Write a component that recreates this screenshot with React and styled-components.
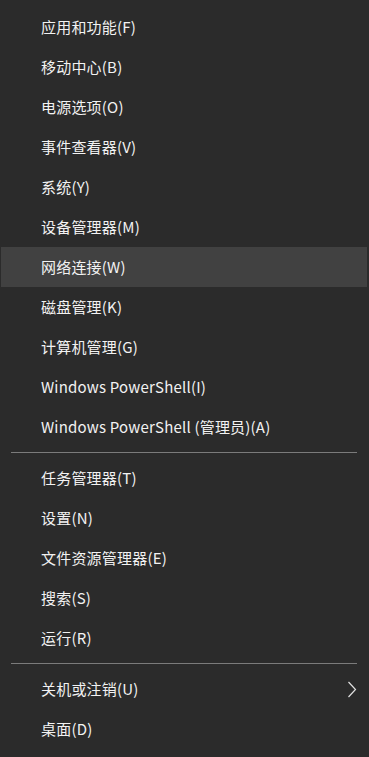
import styled, { createGlobalStyle } from "styled-components"

const Global = createGlobalStyle`
  html, body {
    margin: 0;
    padding: 0;
    background: #2b2b2b;
  }
`

const Menu = styled.div`
  width: 369px;
  height: 757px;
  box-sizing: border-box;
  background: #2b2b2b;
  padding: 7px 2px 8px 1px;
  display: flex;
  flex-direction: column;
  font-family: "Microsoft YaHei", "Noto Sans CJK SC", "Noto Sans", sans-serif;
  font-size: 15px;
  letter-spacing: 0.2px;
  color: #f2f2f2;
`

const Item = styled.div`
  height: 40px;
  display: flex;
  align-items: center;
  justify-content: space-between;
  padding: 0 10px 0 40px;
  background: ${p => (p.$active ? "#414141" : "transparent")};
  white-space: nowrap;
`

const Label = styled.span`
  line-height: 20px;
`

const Separator = styled.div`
  height: 1px;
  margin: 5px 10px 5px 10px;
  background: #7b7b7b;
`

const groups = [
  [
    "应用和功能(F)",
    "移动中心(B)",
    "电源选项(O)",
    "事件查看器(V)",
    "系统(Y)",
    "设备管理器(M)",
    "网络连接(W)",
    "磁盘管理(K)",
    "计算机管理(G)",
    "Windows PowerShell(I)",
    "Windows PowerShell (管理员)(A)",
  ],
  ["任务管理器(T)", "设置(N)", "文件资源管理器(E)", "搜索(S)", "运行(R)"],
  ["关机或注销(U)", "桌面(D)"],
]

const Chevron = () => (
  <svg width="10" height="17" viewBox="0 0 10 17">
    <path d="M1.5 1 L8.5 8.5 L1.5 16" fill="none" stroke="#e0e0e0" strokeWidth="1.2" />
  </svg>
)

export default function App() {
  return (
    <>
      <Global />
      <Menu>
        {groups.map((g, gi) => (
          <div key={gi}>
            {gi > 0 && <Separator />}
            {g.map(label => (
              <Item key={label} $active={label === "网络连接(W)"}>
                <Label>{label}</Label>
                {label === "关机或注销(U)" && <Chevron />}
              </Item>
            ))}
          </div>
        ))}
      </Menu>
    </>
  )
}
